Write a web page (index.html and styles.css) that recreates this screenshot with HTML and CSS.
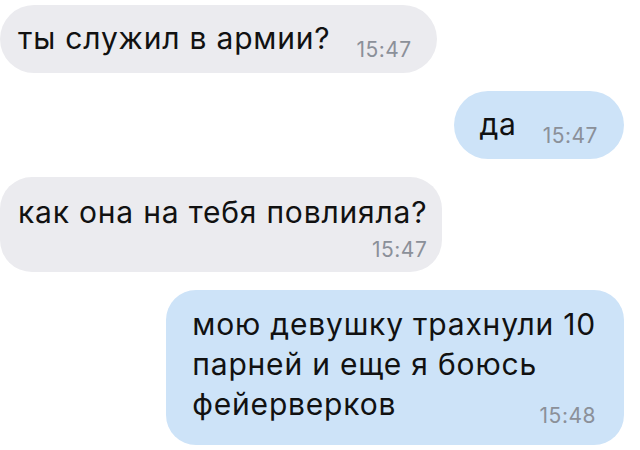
FILE: index.html
```html
<!DOCTYPE html>
<html lang="ru">
<head>
  <meta charset="UTF-8">
  <meta name="viewport" content="width=device-width, initial-scale=1.0">
  <title>Чат</title>
  <link rel="stylesheet" href="styles.css">
</head>
<body>
<div class="chat">
  <div class="msg incoming inline">
    <span class="text">ты служил в армии?</span>
    <span class="time">15:47</span>
  </div>
  <div class="msg outgoing inline">
    <span class="text">да</span>
    <span class="time">15:47</span>
  </div>
  <div class="msg incoming stacked">
    <span class="text">как она на тебя повлияла?</span>
    <span class="time">15:47</span>
  </div>
  <div class="msg outgoing overlay">
    <span class="text">мою девушку трахнули 10<br>парней и еще я боюсь<br>фейерверков</span>
    <span class="time">15:48</span>
  </div>
</div>
</body>
</html>
```

FILE: styles.css
```css
body {
  margin: 0;
  background: #fff;
  font-family: 'Inter', 'Liberation Sans', Arial, sans-serif;
  color: #111;
}

.chat {
  display: flex;
  flex-direction: column;
  gap: 18px;
  padding: 5px 16px 0 0;
}

.msg {
  padding: 13px 25px 15px 18px;
  border-radius: 34px;
  font-size: 30px;
  line-height: 40px;
  letter-spacing: 0.8px;
}

.incoming {
  align-self: flex-start;
  background: #ebebef;
}

.outgoing {
  align-self: flex-end;
  background: #cde3f8;
}

.time {
  font-size: 21px;
  line-height: 22px;
  color: #8b9099;
  letter-spacing: 0.5px;
}

/* time on the same line as the text */
.msg.inline {
  display: flex;
  align-items: flex-end;
  gap: 26px;
}

.msg.inline .time {
  margin-bottom: -3px;
}

.outgoing.inline {
  padding-left: 25px;
  padding-right: 26px;
}

/* time on its own line below the text */
.msg.stacked {
  display: flex;
  flex-direction: column;
  padding: 15px 15px 11px 18px;
  border-radius: 32px;
}

.msg.stacked .time {
  align-self: flex-end;
  margin-top: 7px;
}

/* time tucked into the corner of the last line */
.msg.overlay {
  display: grid;
  padding: 14px 28px 21px 26px;
  border-radius: 30px;
}

.msg.overlay .text,
.msg.overlay .time {
  grid-area: 1 / 1;
}

.msg.overlay .time {
  justify-self: end;
  align-self: end;
  margin-bottom: -3px;
}
```
